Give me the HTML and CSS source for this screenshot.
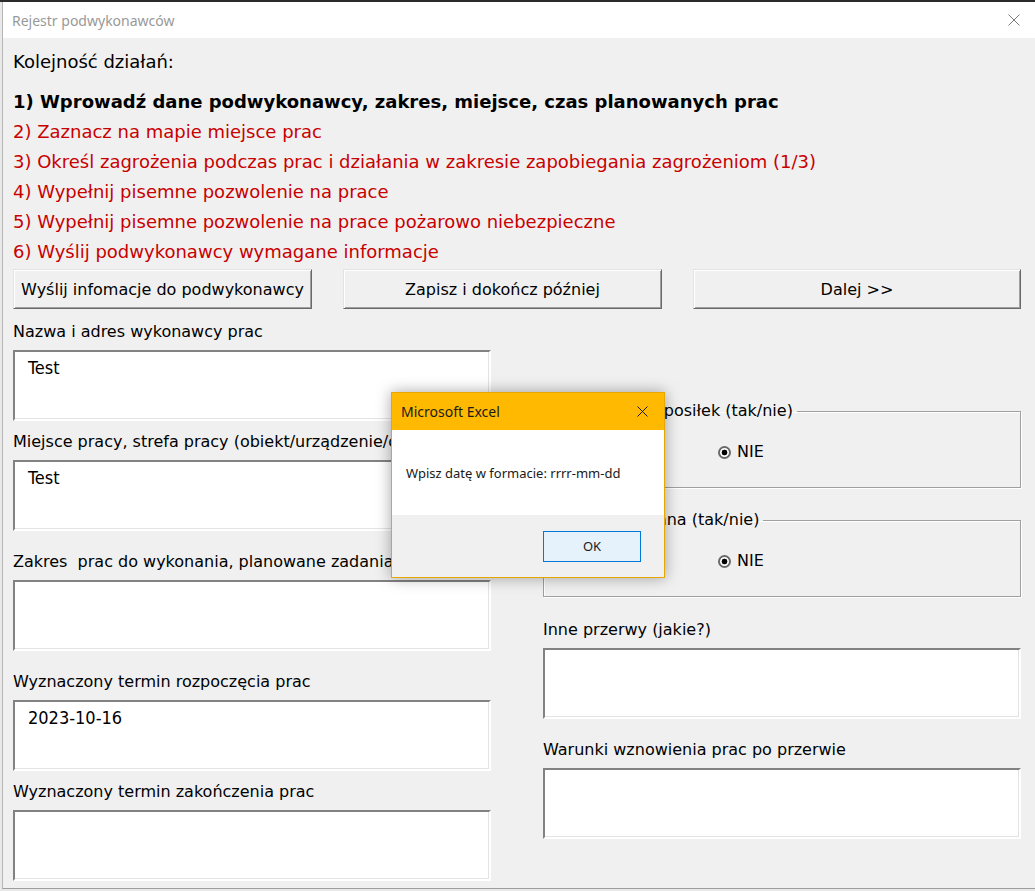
FILE: index.html
```html
<!DOCTYPE html>
<html lang="pl">
<head>
<meta charset="utf-8">
<title>Rejestr podwykonawców</title>
<link rel="stylesheet" href="styles.css">
</head>
<body>
<div class="window">
  <div class="titlebar">
    <span class="title">Rejestr podwykonawców</span>
    <svg class="close" width="12" height="12" viewBox="0 0 12 12"><path d="M0.5 0.5L11.5 11.5M11.5 0.5L0.5 11.5"/></svg>
  </div>
  <div class="content">
    <p class="heading">Kolejność działań:</p>
    <ol class="steps">
      <li class="step current">1) Wprowadź dane podwykonawcy, zakres, miejsce, czas planowanych prac</li>
      <li class="step">2) Zaznacz na mapie miejsce prac</li>
      <li class="step">3) Określ zagrożenia podczas prac i działania w zakresie zapobiegania zagrożeniom (1/3)</li>
      <li class="step">4) Wypełnij pisemne pozwolenie na prace</li>
      <li class="step">5) Wypełnij pisemne pozwolenie na prace pożarowo niebezpieczne</li>
      <li class="step">6) Wyślij podwykonawcy wymagane informacje</li>
    </ol>
    <div class="buttons">
      <button class="btn btn-send">Wyślij infomacje do podwykonawcy</button>
      <button class="btn btn-save">Zapisz i dokończ później</button>
      <button class="btn btn-next">Dalej &gt;&gt;</button>
    </div>
    <div class="form">
      <div class="col">
        <div class="field">
          <div class="label">Nazwa i adres wykonawcy prac</div>
          <div class="textbox">Test</div>
        </div>
        <div class="field gap-s">
          <div class="label">Miejsce pracy, strefa pracy (obiekt/urządzenie/obszar)</div>
          <div class="textbox">Test</div>
        </div>
        <div class="field gap-l">
          <div class="label">Zakres&nbsp; prac do wykonania, planowane zadania</div>
          <div class="textbox"></div>
        </div>
        <div class="field gap-l">
          <div class="label">Wyznaczony termin rozpoczęcia prac</div>
          <div class="textbox">2023-10-16</div>
        </div>
        <div class="field gap-s">
          <div class="label">Wyznaczony termin zakończenia prac</div>
          <div class="textbox"></div>
        </div>
      </div>
      <div class="col">
        <fieldset class="frame frame-first">
          <legend class="legend legend-first">Przerwa na posiłek (tak/nie)</legend>
          <div class="radio"><span class="radio-circle"></span>NIE</div>
        </fieldset>
        <fieldset class="frame frame-second">
          <legend class="legend legend-second">Przerwa dzienna (tak/nie)</legend>
          <div class="radio"><span class="radio-circle"></span>NIE</div>
        </fieldset>
        <div class="field gap-after-frame">
          <div class="label">Inne przerwy (jakie?)</div>
          <div class="textbox"></div>
        </div>
        <div class="field gap-l">
          <div class="label">Warunki wznowienia prac po przerwie</div>
          <div class="textbox"></div>
        </div>
      </div>
    </div>
  </div>

  <div class="msgbox">
    <div class="msg-title">
      <span>Microsoft Excel</span>
      <svg class="msg-close" width="11" height="11" viewBox="0 0 11 11"><path d="M0.5 0.5L10.5 10.5M10.5 0.5L0.5 10.5"/></svg>
    </div>
    <div class="msg-body">Wpisz datę w formacie: rrrr-mm-dd</div>
    <div class="msg-footer">
      <button class="msg-ok">OK</button>
    </div>
  </div>
</div>
</body>
</html>
```

FILE: styles.css
```css
html {
  background: linear-gradient(#2b2b2b 0, #2b2b2b 2px, #e9e9e9 2px);
}
body {
  margin: 0;
  width: 1035px;
  height: 891px;
  overflow: hidden;
}
.window {
  position: relative;
  margin: 2px 0 0 2px;
  width: 1040px;
  height: 886px;
  border-left: 1px solid #b5b5b5;
  border-bottom: 1px solid #9d9d9d;
  background: #f0f0f0;
  font-family: "DejaVu Sans", sans-serif;
  color: #000;
}
.titlebar {
  height: 36px;
  background: #fff;
  display: flex;
  align-items: center;
  padding-left: 9px;
  width: 1032px;
  box-sizing: border-box;
  justify-content: space-between;
  padding-right: 15px;
}
.title {
  font-family: "Noto Sans", "Open Sans", sans-serif;
  font-size: 14px;
  color: #999;
}
.close path {
  stroke: #7a7a7a;
  stroke-width: 1;
  fill: none;
}
.content {
  padding: 9px 0 0 10px;
}
.heading {
  margin: 0;
  font-size: 18px;
  line-height: 30px;
}
.steps {
  list-style: none;
  margin: 10px 0 0;
  padding: 0;
}
.step {
  font-size: 18px;
  line-height: 30px;
  color: #c80000;
}
.step.current {
  color: #000;
  font-weight: bold;
}
.buttons {
  display: flex;
  gap: 31px;
  margin-top: 2px;
}
.btn {
  height: 40px;
  box-sizing: border-box;
  background: #f0f0f0;
  border: 1px solid;
  border-color: #e3e3e3 #696969 #696969 #e3e3e3;
  box-shadow: inset 1px 1px 0 #fff, inset -1px -1px 0 #a0a0a0;
  font-family: inherit;
  font-size: 16px;
  color: #000;
  padding: 0;
}
.btn-send { width: 299px; }
.btn-save { width: 319px; }
.btn-next { width: 328px; }

.form {
  display: flex;
  gap: 52px;
  margin-top: 13px;
}
.col {
  width: 478px;
  display: flex;
  flex-direction: column;
}
.label {
  font-size: 16px;
  line-height: 20px;
  height: 20px;
  white-space: nowrap;
  margin-bottom: 8px;
}
.textbox {
  height: 71px;
  box-sizing: border-box;
  background: #fff;
  border: 2px solid;
  border-color: #828282 #fff #fff #828282;
  box-shadow: inset -1px -1px 0 #e3e3e3;
  font-family: "DejaVu Sans Condensed", "DejaVu Sans", sans-serif;
  font-stretch: condensed;
  font-size: 18px;
  line-height: 22px;
  padding: 5px 13px;
}
.gap-s { margin-top: 11px; }
.gap-l { margin-top: 21px; }
.gap-after-frame { margin-top: 23px; }

.frame {
  margin: 0;
  padding: 21px 0 25px 0;
  border: 1px solid #a0a0a0;
  box-shadow: 1px 1px 0 #fff, inset 1px 1px 0 #fff;
  min-width: 0;
}
.frame-first { margin-top: 79px; }
.frame-second { margin-top: 22px; }
.legend {
  font-size: 16px;
  line-height: 20px;
  padding: 0 4px;
  margin-left: 3px;
}
.legend-first { margin-left: 22px; }
.legend-second { margin-left: 7px; }
.radio {
  display: flex;
  align-items: center;
  gap: 6px;
  font-size: 16px;
  line-height: 20px;
  padding-left: 174px;
}
.radio-circle {
  width: 13px;
  height: 13px;
  box-sizing: border-box;
  border-radius: 50%;
  border: 2px solid #6a6a6a;
  background: #fff radial-gradient(circle, #000 0, #000 2.6px, transparent 3.2px);
}

.msgbox {
  position: absolute;
  left: 388px;
  top: 390px;
  width: 274px;
  height: 186px;
  box-sizing: border-box;
  border: 1px solid #e6a800;
  background: #f0f0f0;
  box-shadow: 0 0 14px rgba(0, 0, 0, 0.35);
  font-family: "Noto Sans", "Open Sans", sans-serif;
  display: flex;
  flex-direction: column;
}
.msg-title {
  height: 37px;
  background: #ffb900;
  display: flex;
  align-items: center;
  justify-content: space-between;
  padding: 0 16px 0 9px;
  font-size: 14px;
  color: #1a1a1a;
}
.msg-close path {
  stroke: #1a1a1a;
  stroke-width: 1;
  fill: none;
}
.msg-body {
  height: 85px;
  background: #fff;
  display: flex;
  align-items: center;
  padding-left: 14px;
  font-size: 13px;
  color: #1a1a1a;
}
.msg-footer {
  flex: 1;
  display: flex;
  justify-content: flex-end;
  align-items: center;
  padding-right: 23px;
}
.msg-ok {
  width: 98px;
  height: 31px;
  box-sizing: border-box;
  background: #e5f1fb;
  border: 1px solid #0078d7;
  font-family: inherit;
  font-size: 13px;
  color: #1a1a1a;
  padding: 0;
}
```
